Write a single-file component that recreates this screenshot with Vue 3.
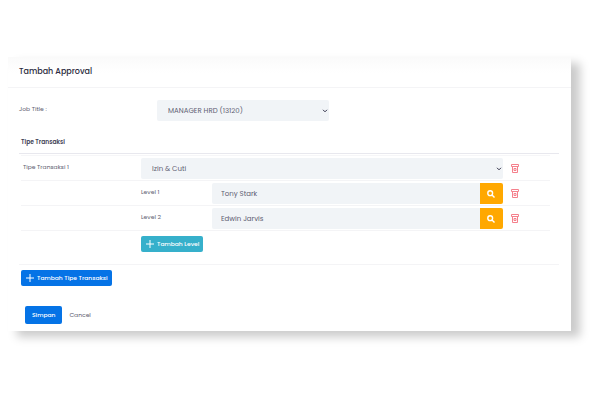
<script setup>
import { ref, reactive } from "vue";

const jobTitle = ref("MANAGER HRD (13120)");

const state = reactive({
  types: [
    { type: "Izin & Cuti", levels: ["Tony Stark", "Edwin Jarvis"] },
  ],
});

function addType() {
  state.types.push({ type: "Izin & Cuti", levels: [""] });
}

function removeType(i) {
  state.types.splice(i, 1);
}

function addLevel(item) {
  item.levels.push("");
}

function removeLevel(item, j) {
  item.levels.splice(j, 1);
}
</script>

<template>
  <form class="card" @submit.prevent>
    <header class="card-header">
      <h1>Tambah Approval</h1>
    </header>

    <div class="card-body">
      <div class="job-row">
        <label for="job">Job Title :</label>
        <div class="select-wrap">
          <select id="job" v-model="jobTitle" class="field">
            <option>MANAGER HRD (13120)</option>
          </select>
          <svg class="chevron" viewBox="0 0 6 4"><path d="M1 .8l2 2 2-2" /></svg>
        </div>
      </div>

      <h2>Tipe Transaksi</h2>

      <div class="types">
        <section v-for="(item, i) in state.types" :key="i" class="type">
          <div class="row">
            <label :for="'type' + i" class="type-label">Tipe Transaksi {{ i + 1 }}</label>
            <div class="select-wrap">
              <select :id="'type' + i" v-model="item.type" class="field">
                <option>Izin &amp; Cuti</option>
              </select>
              <svg class="chevron" viewBox="0 0 6 4"><path d="M1 .8l2 2 2-2" /></svg>
            </div>
            <button type="button" class="trash" aria-label="Hapus tipe" @click="removeType(i)">
              <svg viewBox="0 0 8 9"><path d="M.5 .5h7v2h-7zM1.5 2.5v6h5v-6M3 4.5h2v2h-2z" /></svg>
            </button>
          </div>

          <div v-for="(level, j) in item.levels" :key="j" class="row">
            <div class="level">
              <label :for="'level' + i + '-' + j">Level {{ j + 1 }}</label>
              <div class="group">
                <input :id="'level' + i + '-' + j" v-model="item.levels[j]" type="text" class="field" />
                <button type="button" class="search" aria-label="Cari">
                  <svg viewBox="0 0 8 8"><circle cx="3.2" cy="3.2" r="2.4" /><path d="M5 5l2.5 2.5" /></svg>
                </button>
              </div>
            </div>
            <button type="button" class="trash" aria-label="Hapus level" @click="removeLevel(item, j)">
              <svg viewBox="0 0 8 9"><path d="M.5 .5h7v2h-7zM1.5 2.5v6h5v-6M3 4.5h2v2h-2z" /></svg>
            </button>
          </div>

          <div class="add-row">
            <button type="button" class="btn teal" @click="addLevel(item)">
              <svg viewBox="0 0 8 8"><path d="M4 0v8M0 4h8" /></svg>
              Tambah Level
            </button>
          </div>
        </section>
      </div>

      <button type="button" class="btn blue" @click="addType">
        <svg viewBox="0 0 8 8"><path d="M4 0v8M0 4h8" /></svg>
        Tambah Tipe Transaksi
      </button>

      <footer>
        <button type="submit" class="save">Simpan</button>
        <button type="button" class="cancel">Cancel</button>
      </footer>
    </div>
  </form>
</template>

<style>
body {
  background-color: #ffffff;
}
</style>

<style scoped>
.card {
  margin: 57px 29px 40px 8px;
  background: linear-gradient(#fafafa, #ffffff 16px);
  box-shadow: 9px 6px 9px #cbcbcb;
  color: #5e5e72;
  font-family: Poppins, Inter, "Open Sans", sans-serif;
  font-size: 6px;
  line-height: 10px;
}

button,
input,
select {
  font: inherit;
  color: inherit;
  border: 0;
  margin: 0;
  padding: 0;
}

button {
  cursor: pointer;
}

svg {
  fill: none;
  stroke: currentColor;
}

.card-header {
  padding: 10px 11px;
  border-bottom: 1px solid #f4f4f6;
}

h1 {
  margin: 0;
  font-size: 8px;
  line-height: 10px;
  font-weight: 500;
  color: #2c2c40;
}

.card-body {
  padding: 12px 12px 7px 11px;
}

.job-row {
  display: grid;
  grid-template-columns: 138px 172px;
  line-height: 18px;
}

.select-wrap {
  display: grid;
  align-items: center;
}

.select-wrap > * {
  grid-area: 1 / 1;
}

.field {
  width: 100%;
  min-width: 0;
  height: 21px;
  padding: 0 11px;
  box-sizing: border-box;
  appearance: none;
  border-radius: 2px;
  background-color: #f1f4f7;
  font-size: 7px;
}

.chevron {
  width: 6px;
  height: 4px;
  justify-self: end;
  margin-right: 1px;
  color: #33334a;
  pointer-events: none;
}

h2 {
  margin: 16px 0 0;
  padding: 0 2px 6px;
  border-bottom: 1px solid #e8e8ee;
  font-size: 6px;
  line-height: 10px;
  font-weight: 600;
  color: #3f3f55;
}

.types {
  padding-top: 1px;
  border-bottom: 1px solid #f4f4f6;
}

.type {
  margin: 0 9px 0 2px;
  border-top: 1px solid #f6f6f8;
}

.row {
  display: grid;
  grid-template-columns: 120px 1fr 47px;
  padding: 2px 0 1px;
  border-bottom: 1px solid #f4f4f6;
}

.type-label {
  padding: 4px 2px 0;
}

.level {
  grid-column: 2;
  display: grid;
  grid-template-columns: 71px 1fr;
}

.level label {
  padding-top: 4px;
}

.group {
  display: flex;
}

.group .field {
  padding: 0 9px;
  border-radius: 2px 0 0 2px;
}

.search {
  flex: 0 0 23px;
  display: grid;
  place-items: center;
  padding-right: 2px;
  border-radius: 0 2px 2px 0;
  background-color: #ffa800;
  color: #ffffff;
}

.search svg {
  width: 8px;
  height: 8px;
  stroke-width: 1.4;
}

.trash {
  padding-left: 8px;
  display: flex;
  align-items: center;
  background: none;
  color: #f5808c;
}

.trash svg {
  width: 8px;
  height: 9px;
}

.add-row {
  padding: 5px 0 12px 120px;
}

.btn {
  display: flex;
  align-items: center;
  gap: 3px;
  height: 16px;
  padding: 0 4px 0 5px;
  border-radius: 2px;
  color: #ffffff;
  font-weight: 500;
}

.btn svg {
  width: 8px;
  height: 8px;
}

.teal {
  background-color: #36b0cb;
}

.blue {
  margin: 5px 2px 0;
  background-color: #0573e6;
}

footer {
  display: flex;
  gap: 7px;
  padding: 20px 6px 0;
}

.save {
  height: 18px;
  padding: 0 7px;
  border-radius: 2px;
  background-color: #0573e6;
  color: #ffffff;
  font-weight: 500;
}

.cancel {
  background: none;
}
</style>
